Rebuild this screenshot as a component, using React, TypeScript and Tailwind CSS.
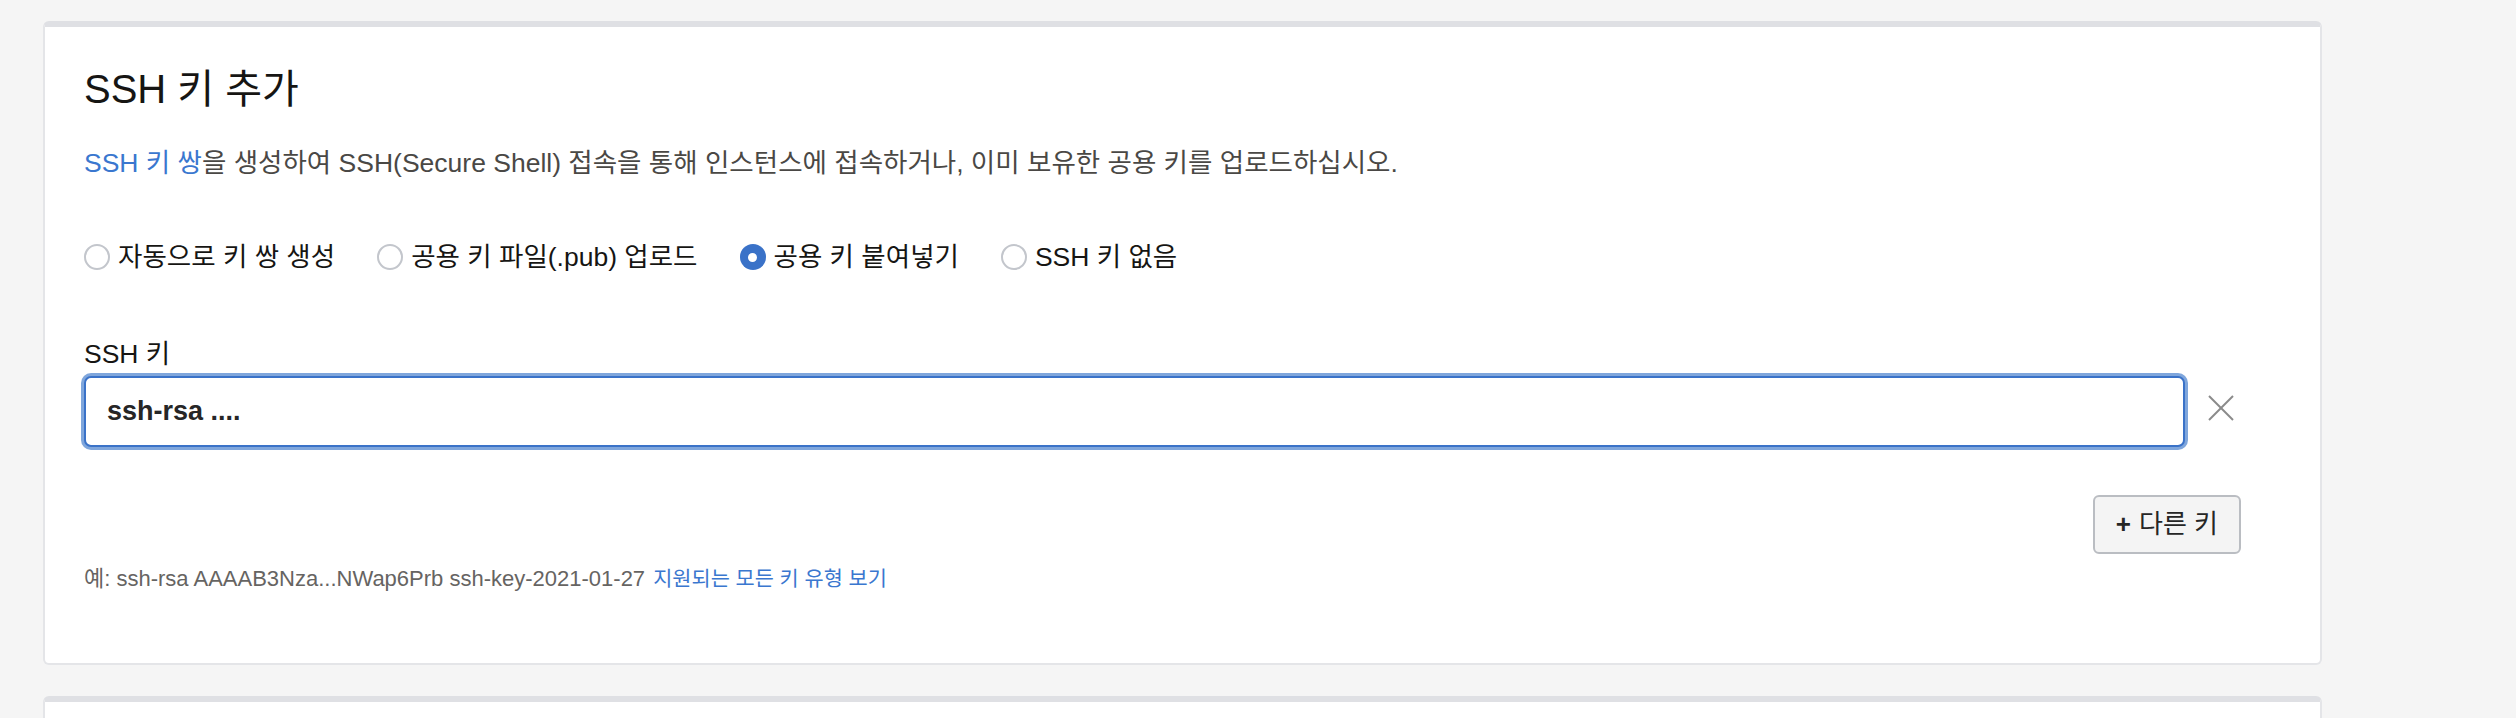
import React, { useState } from 'react';

const keyOptions = [
  { id: 'generate', label: '자동으로 키 쌍 생성' },
  { id: 'upload', label: '공용 키 파일(.pub) 업로드' },
  { id: 'paste', label: '공용 키 붙여넣기' },
  { id: 'none', label: 'SSH 키 없음' },
];

function RadioDot({ checked }: { checked: boolean }) {
  if (checked) {
    return (
      <span className="flex h-[26px] w-[26px] shrink-0 items-center justify-center rounded-full bg-[#3a72c8]">
        <span className="h-[9px] w-[9px] rounded-full bg-white" />
      </span>
    );
  }
  return <span className="h-[26px] w-[26px] shrink-0 rounded-full border-2 border-[#c3c6cc] bg-white" />;
}

export default function App() {
  const [selected, setSelected] = useState('paste');
  const [sshKey, setSshKey] = useState('ssh-rsa ....');

  return (
    <div className="h-[718px] overflow-hidden bg-[#f5f5f5] pl-[43px] pt-[21px] font-['Liberation_Sans','Noto_Sans_CJK_KR',sans-serif]">
      <div className="w-[2279px] rounded-[6px] border-2 border-t-[6px] border-[#e4e5e8] border-t-[#dfe0e4] bg-white pb-[69px] pl-[39px] pr-[79px] pt-[43px]">
        {/* Title */}
        <h2 className="text-[40px] leading-[38px] text-[#161513]">SSH 키 추가</h2>

        {/* Description */}
        <p className="mt-[37px] text-[26.5px] leading-[36px] text-[#4a4845]">
          <a className="text-[#3a77cf]">SSH 키 쌍</a>을 생성하여 SSH(Secure Shell) 접속을 통해 인스턴스에 접속하거나, 이미 보유한 공용 키를 업로드하십시오.
        </p>

        {/* Key options */}
        <div className="mt-[58px] flex gap-[42px] text-[26.5px] leading-[36px] text-[#161513]">
          {keyOptions.map((option) => (
            <label
              key={option.id}
              onClick={() => setSelected(option.id)}
              className="flex cursor-pointer items-center gap-[8px]"
            >
              <RadioDot checked={selected === option.id} />
              <span>{option.label}</span>
            </label>
          ))}
        </div>

        {/* SSH key input */}
        <label className="mt-[61px] block text-[26.5px] leading-[36px] text-[#161513]">SSH 키</label>
        <div className="mt-[4px] flex items-center">
          <input
            type="text"
            value={sshKey}
            onChange={(e) => setSshKey(e.target.value)}
            className="h-[71px] flex-1 rounded-[7px] border-2 border-[#3a72c8] bg-white pl-[21px] text-[27px] font-bold text-[#262626] outline-none ring-[3px] ring-[#7fa6dc]"
          />
          <button className="-mt-[7px] ml-[23px] w-[33px] text-[#8a8a8a]">
            <svg width="26" height="26" viewBox="0 0 26 26" fill="none" stroke="currentColor" strokeWidth="2">
              <line x1="1" y1="1" x2="25" y2="25" />
              <line x1="25" y1="1" x2="1" y2="25" />
            </svg>
          </button>
        </div>

        {/* Add another key */}
        <div className="mt-[48px] flex justify-end">
          <button className="flex h-[59px] items-center rounded-[6px] border-2 border-[#babdc2] bg-[#f4f4f4] px-[21px] text-[26px] text-[#262626]">
            <span className="font-bold">+</span>
            <span className="ml-[8px]">다른 키</span>
          </button>
        </div>

        {/* Example */}
        <p className="mt-[10px] text-[22px] leading-[30px] text-[#666462]">
          예: ssh-rsa AAAAB3Nza...NWap6Prb ssh-key-2021-01-27{' '}
          <a className="ml-[2px] text-[20.8px] text-[#3a77cf]">지원되는 모든 키 유형 보기</a>
        </p>
      </div>

      {/* Next section */}
      <div className="mt-[31px] h-[120px] w-[2279px] rounded-t-[6px] border-x-2 border-t-[6px] border-[#e4e5e8] border-t-[#dfe0e4] bg-white" />
    </div>
  );
}
